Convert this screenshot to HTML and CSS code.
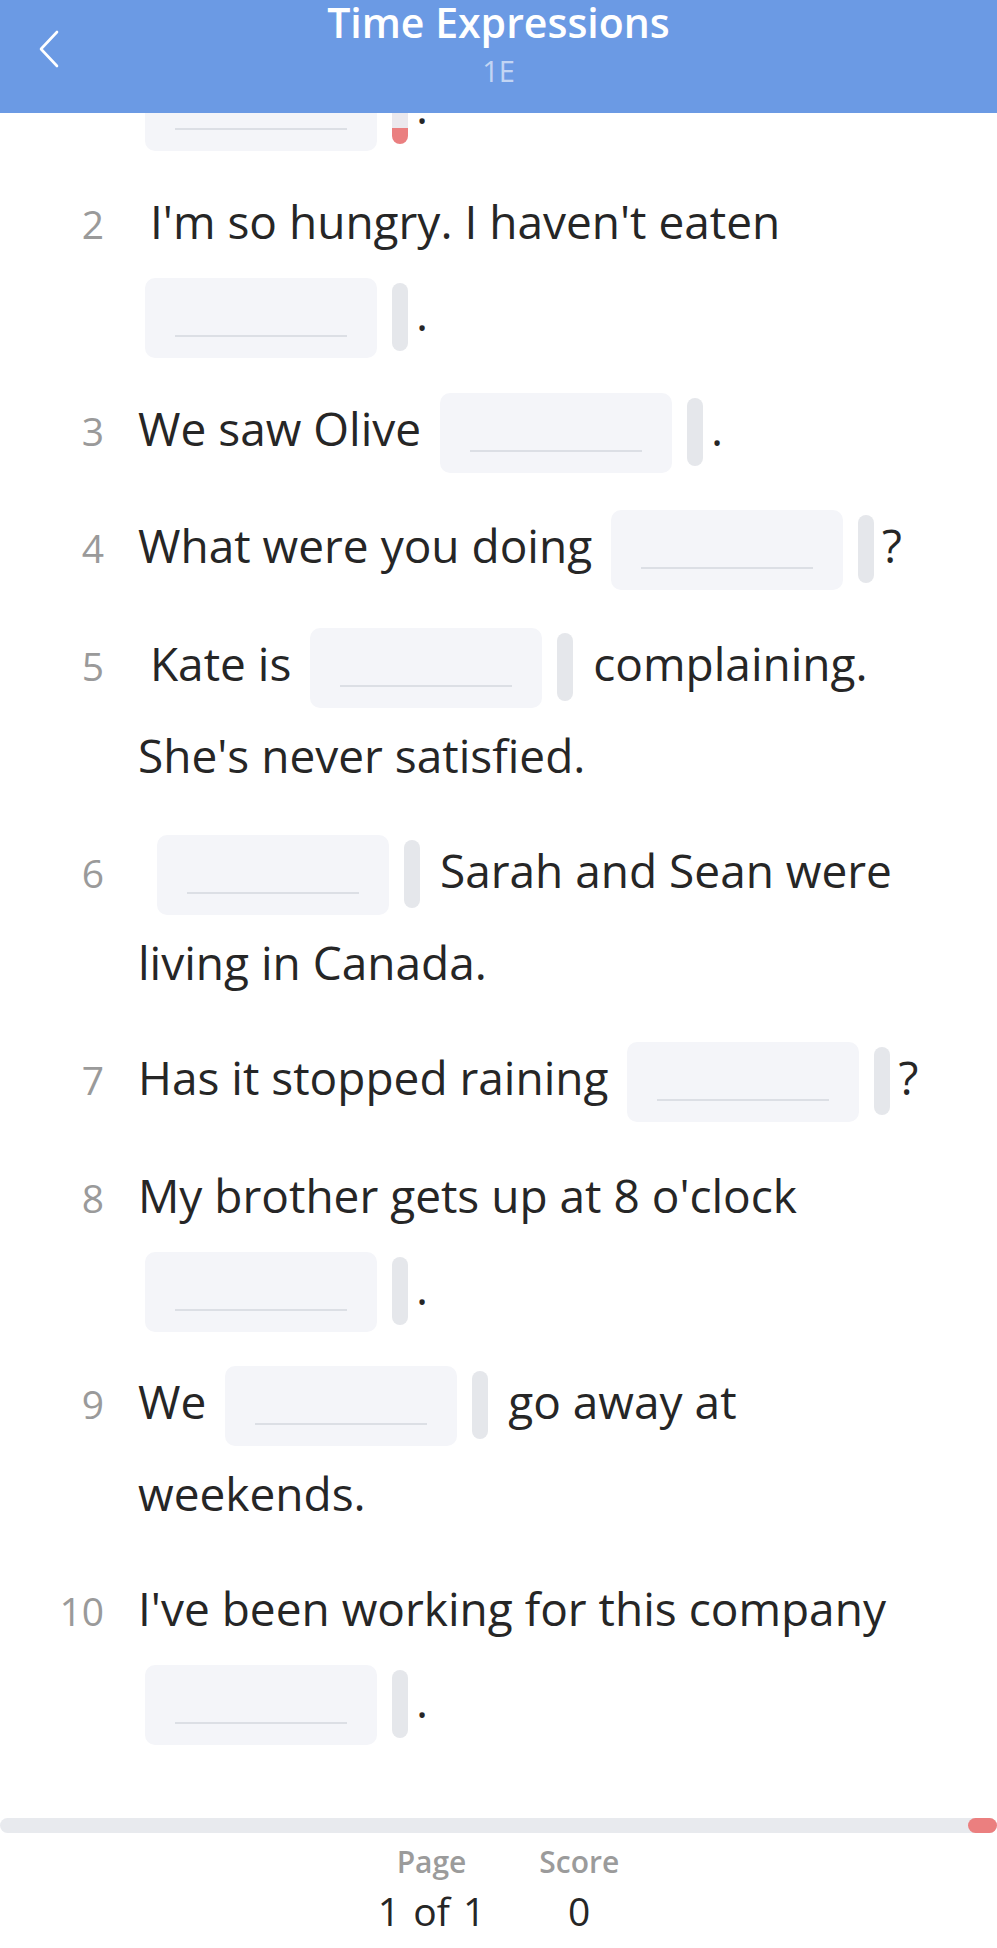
FILE: index.html
```html
<!DOCTYPE html>
<html lang="en">
<head>
    <meta charset="UTF-8">
    <meta name="viewport" content="width=device-width, initial-scale=1.0">
    <title>Time Expressions - 1E</title>
    <link rel="stylesheet" href="styles.css">
</head>
<body>
    <header class="topbar">
        <a class="back" href="#">
            <svg width="24" height="44" viewBox="0 0 24 44">
                <path d="M19 6 L3 23 L19 40" fill="none" stroke="#fff" stroke-width="2.6" stroke-linecap="round" stroke-linejoin="round"/>
            </svg>
        </a>
        <div class="titles">
            <h1>Time Expressions</h1>
            <p>1E</p>
        </div>
        <div></div>
    </header>

    <main class="scroller">
        <ol class="questions">
            <li class="question">
                <span class="num">1</span>
                <div class="text">I haven't visited my grandparents <span class="gap"><span class="blank"></span><span class="bar wrong"></span>.</span></div>
            </li>
            <li class="question">
                <span class="num">2</span>
                <div class="text">&nbsp;I'm so hungry. I haven't eaten <span class="gap"><span class="blank"></span><span class="bar"></span>.</span></div>
            </li>
            <li class="question">
                <span class="num">3</span>
                <div class="text">We saw Olive <span class="gap"><span class="blank"></span><span class="bar"></span>.</span></div>
            </li>
            <li class="question">
                <span class="num">4</span>
                <div class="text">What were you doing <span class="gap"><span class="blank"></span><span class="bar"></span>?</span></div>
            </li>
            <li class="question">
                <span class="num">5</span>
                <div class="text">&nbsp;Kate is <span class="gap"><span class="blank"></span><span class="bar"></span></span> complaining. She's never satisfied.</div>
            </li>
            <li class="question">
                <span class="num">6</span>
                <div class="text">&nbsp;<span class="gap"><span class="blank"></span><span class="bar"></span></span> Sarah and Sean were living in Canada.</div>
            </li>
            <li class="question">
                <span class="num">7</span>
                <div class="text">Has it stopped raining <span class="gap"><span class="blank"></span><span class="bar"></span>?</span></div>
            </li>
            <li class="question">
                <span class="num">8</span>
                <div class="text">My brother gets up at 8 o'clock <span class="gap"><span class="blank"></span><span class="bar"></span>.</span></div>
            </li>
            <li class="question">
                <span class="num">9</span>
                <div class="text">We <span class="gap"><span class="blank"></span><span class="bar"></span></span> go away at weekends.</div>
            </li>
            <li class="question">
                <span class="num">10</span>
                <div class="text">I've been working for this company <span class="gap"><span class="blank"></span><span class="bar"></span>.</span></div>
            </li>
        </ol>
    </main>

    <footer class="footer">
        <div class="progress"><div class="progress-fill"></div></div>
        <div class="stats">
            <div class="stat">
                <span class="stat-label">Page</span>
                <span class="stat-value">1 of 1</span>
            </div>
            <div class="stat">
                <span class="stat-label">Score</span>
                <span class="stat-value">0</span>
            </div>
        </div>
    </footer>
</body>
</html>
```

FILE: styles.css
```css
* {
    margin: 0;
    padding: 0;
    box-sizing: border-box;
    font-family: "Open Sans", "Noto Sans", Arial, sans-serif;
}
html, body {
    height: 100%;
}
body {
    background: #fff;
    color: #262626;
    display: flex;
    flex-direction: column;
    overflow: hidden;
}
.topbar {
    background: #6b9ae4;
    height: 113px;
    flex-shrink: 0;
    display: grid;
    grid-template-columns: 1fr auto 1fr;
    align-items: start;
    color: #fff;
}
.back {
    display: block;
    width: 24px;
    margin: 26px 0 0 38px;
}
.back svg {
    display: block;
}
.titles {
    text-align: center;
}
.titles h1 {
    font-size: 41px;
    font-weight: 600;
    line-height: 44px;
}
.titles p {
    font-size: 29px;
    line-height: 34px;
    margin-top: 10px;
    color: rgba(255, 255, 255, 0.62);
}
.scroller {
    flex: 1;
    min-height: 0;
    overflow: hidden;
}
.questions {
    list-style: none;
    margin-top: -145px;
    padding: 0 57px 0 44px;
}
.question {
    display: flex;
    align-items: baseline;
    margin-bottom: 22.8px;
}
.num {
    width: 60px;
    flex-shrink: 0;
    text-align: right;
    font-size: 39px;
    line-height: 92px;
    color: #9a9a9a;
    margin-right: 34px;
}
.text {
    flex: 1;
    font-size: 46px;
    line-height: 92px;
}
.gap {
    white-space: nowrap;
}
.blank {
    display: inline-block;
    width: 232px;
    height: 80px;
    margin-left: 7px;
    vertical-align: -27px;
    background: #f4f5f9;
    border-radius: 10px;
    position: relative;
}
.blank::after {
    content: "";
    position: absolute;
    left: 30px;
    right: 30px;
    bottom: 21px;
    height: 2px;
    background: #dcdfe5;
}
.bar {
    display: inline-block;
    width: 16px;
    height: 68px;
    margin: 0 8px 0 15px;
    vertical-align: -20px;
    background: #e5e7eb;
    border-radius: 8px;
}
.bar.wrong {
    background: linear-gradient(to top, #ea7f80 16px, #ebe9ee 16px);
}
.footer {
    flex-shrink: 0;
    padding: 14px 0 14px;
}
.progress {
    height: 15px;
    background: #e8eaee;
    border-radius: 8px;
    display: flex;
    justify-content: flex-end;
}
.progress-fill {
    width: 29px;
    background: #eb7f7f;
    border-radius: 8px;
}
.stats {
    display: flex;
    justify-content: center;
    gap: 54px;
    margin-top: 9px;
}
.stat {
    display: flex;
    flex-direction: column;
    align-items: center;
}
.stat-label {
    font-size: 30px;
    font-weight: 600;
    line-height: 40px;
    color: #9b9b9b;
}
.stat-value {
    font-size: 39px;
    line-height: 47px;
    margin-top: 5px;
    word-spacing: 3px;
    color: #262626;
}
```
